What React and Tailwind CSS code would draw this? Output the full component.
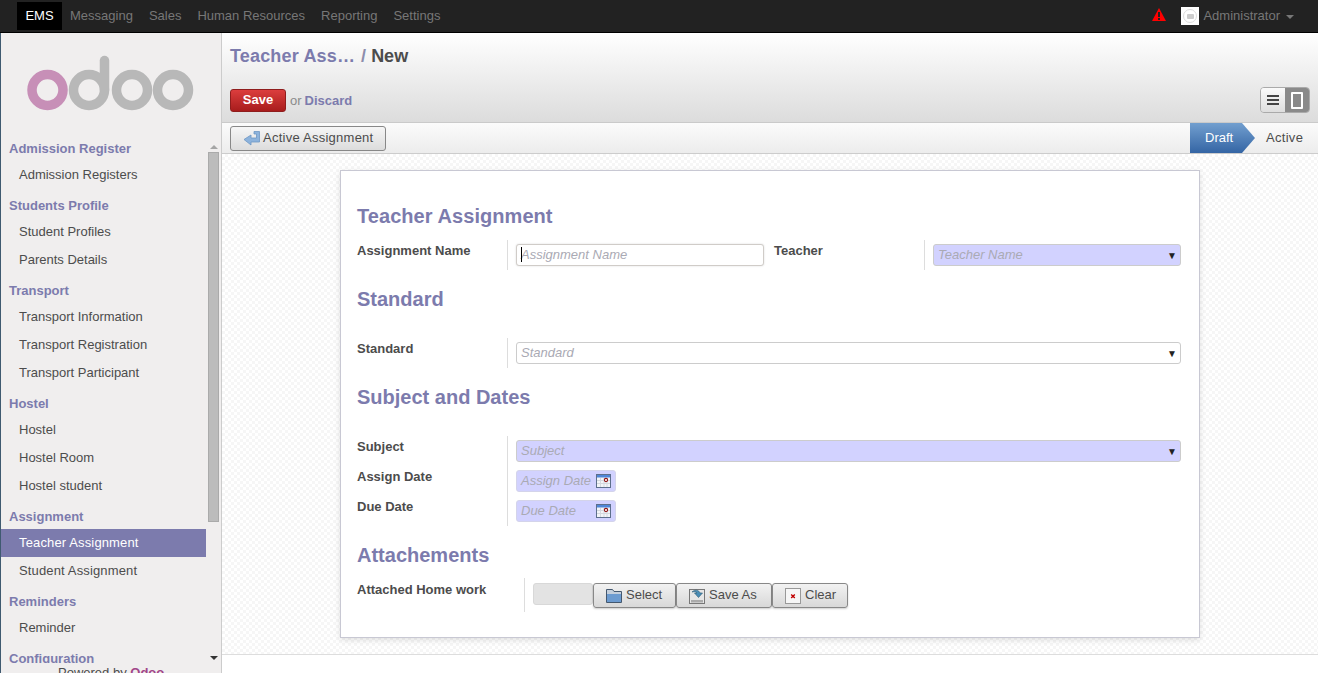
const sidebarMenu = [
  { title: "Admission Register", items: ["Admission Registers"] },
  { title: "Students Profile", items: ["Student Profiles", "Parents Details"] },
  { title: "Transport", items: ["Transport Information", "Transport Registration", "Transport Participant"] },
  { title: "Hostel", items: ["Hostel", "Hostel Room", "Hostel student"] },
  { title: "Assignment", items: ["Teacher Assignment", "Student Assignment"] },
  { title: "Reminders", items: ["Reminder"] },
  { title: "Configuration", items: [] },
];

const topMenu = ["Messaging", "Sales", "Human Resources", "Reporting", "Settings"];

function OdooLogo() {
  return (
    <svg width="170" height="60" viewBox="0 0 170 60" className="block">
      <circle cx="20.5" cy="35" r="15.5" fill="none" stroke="#c78fb7" strokeWidth="9.5" />
      <circle cx="62" cy="35" r="15.5" fill="none" stroke="#b8b8b8" strokeWidth="9.5" />
      <path d="M77.5 35V5.5" fill="none" stroke="#b8b8b8" strokeWidth="9.5" strokeLinecap="round" />
      <circle cx="105" cy="35" r="15.5" fill="none" stroke="#b8b8b8" strokeWidth="9.5" />
      <circle cx="146" cy="35" r="15.5" fill="none" stroke="#b8b8b8" strokeWidth="9.5" />
    </svg>
  );
}

function WarningIcon() {
  return (
    <svg width="14" height="13" viewBox="0 0 14 13" className="block">
      <path d="M7 0L14 13H0z" fill="#ff0000" />
      <path d="M7 4v5M7 10v2" stroke="#222222" strokeWidth="2" />
    </svg>
  );
}

function CalendarIcon() {
  return (
    <svg width="15" height="14" viewBox="0 0 15 14" className="block">
      <rect x="0.5" y="0.5" width="14" height="13" fill="#f2f4f8" stroke="#5d6f8c" />
      <rect x="1" y="1" width="13" height="2.5" fill="#4f86d8" />
      <path d="M1 6.5h13M1 9.5h13M4.5 4v9M8 4v9M11 4v9" stroke="#d4d8de" strokeWidth="1" />
      <circle cx="10" cy="6" r="1.6" fill="#fff" stroke="#8e1212" strokeWidth="1.1" />
    </svg>
  );
}

function FolderIcon() {
  return (
    <svg width="16" height="15" viewBox="0 0 16 15" className="block">
      <path d="M0.5 14.5V1.5h6l1.5 2h7.5v11z" fill="#c4cfdc" stroke="#44586f" />
      <path d="M1 14V6h14v8z" fill="#6c9bd0" />
    </svg>
  );
}

function SaveAsIcon() {
  return (
    <svg width="16" height="16" viewBox="0 0 16 16" className="block">
      <rect x="0.5" y="1.5" width="15" height="14" fill="#e6e6e6" stroke="#777" />
      <rect x="2" y="12" width="12" height="2.5" fill="#aaa" />
      <path d="M3 4c3-3 7-2 8 1h2.5l-4 4.5-4-4.5H8c-1-1.5-3-1.5-5-1z" fill="#4a8db5" stroke="#2c5a75" strokeWidth="0.6" />
    </svg>
  );
}

function ClearIcon() {
  return (
    <svg width="16" height="16" viewBox="0 0 16 16" className="block">
      <rect x="0.5" y="0.5" width="15" height="15" fill="#f6f6f6" stroke="#999" />
      <path d="M6.2 6.5l3.6 3.5M9.8 6.5l-3.6 3.5" stroke="#c00000" strokeWidth="1.4" />
    </svg>
  );
}

function ReturnIcon() {
  return (
    <svg width="17" height="17" viewBox="0 0 17 17" className="block">
      <path d="M16.5 1.5H11v2.5h2.5v4H8V5L1 9.5 8 15v-3h8.5z" fill="#8db3dc" stroke="#6d97c4" strokeWidth="0.8" strokeLinejoin="round" />
    </svg>
  );
}

function SectionTitle({ children, className }) {
  return <h2 className={`text-[20px] leading-[22px] font-bold text-[#7c7bad] ${className}`}>{children}</h2>;
}

function Label({ children, className }) {
  return <div className={`font-bold text-[13px] leading-[18px] text-[#4c4c4c] ${className}`}>{children}</div>;
}

function SelectBox({ placeholder, required, className }) {
  return (
    <div
      className={`h-[22px] flex items-center justify-between pl-[4px] pr-[3px] rounded-[3px] border border-[#cccccc] italic text-[13px] text-[#aaaab4] ${
        required ? "bg-[#d2d2ff]" : "bg-white"
      } ${className}`}
    >
      <span>{placeholder}</span>
      <span className="not-italic text-[10px] text-[#222]">▼</span>
    </div>
  );
}

function DateBox({ placeholder }) {
  return (
    <div className="w-[100px] h-[22px] flex items-center justify-between pl-[4px] pr-[4px] rounded-[3px] border border-[#d4d4ea] bg-[#d2d2ff] italic text-[13px] text-[#aaaab4]">
      <span>{placeholder}</span>
      <CalendarIcon />
    </div>
  );
}

function FileButton({ icon, label, className }) {
  return (
    <button className={`h-[25px] flex items-center gap-[4px] rounded-[3px] border border-[#888] bg-gradient-to-b from-[#f2f2f2] to-[#d8d8d8] text-[13px] text-[#4c4c4c] shadow-[0_1px_2px_rgba(0,0,0,0.2)] ${className}`}>
      {icon}
      <span className="pb-[2px]">{label}</span>
    </button>
  );
}

export default function App() {
  return (
    <div className="h-screen overflow-hidden flex flex-col bg-white text-[13px] text-[#4c4c4c] font-['Liberation_Sans',Arial,sans-serif]">
      {/* top bar */}
      <div className="h-[33px] shrink-0 flex items-center justify-between bg-[#222222] border-b border-black">
        <div className="flex items-center pl-[17px]">
          <div className="h-[28px] w-[45px] flex items-center justify-center bg-black text-white">EMS</div>
          {topMenu.map((item) => (
            <span key={item} className="pl-[8px] pr-[8px] text-[#777777]">
              {item}
            </span>
          ))}
        </div>
        <div className="flex items-center pr-[24px] text-[#777777]">
          <div className="mr-[15px] mb-[3px]">
            <WarningIcon />
          </div>
          <div className="w-[18px] h-[18px] mr-[4px] bg-white flex items-center justify-center">
            <div className="w-[14px] h-[14px] rounded-full border border-[#ddd] flex items-center justify-center">
              <div className="w-[7px] h-[5px] bg-[#ccc] rounded-[1px]" />
            </div>
          </div>
          <span>Administrator</span>
          <span className="ml-[6px] mt-[2px] border-x-[4px] border-t-[4px] border-x-transparent border-t-[#777777]" />
        </div>
      </div>

      <div className="flex-1 flex min-h-0">
        {/* sidebar */}
        <div className="w-[222px] shrink-0 flex flex-col bg-[#f0eeee] border-l border-l-[#3f5a70] border-r border-r-[#cccccc]">
          <div className="h-[107px] shrink-0 pl-[26px] pt-[22px]">
            <OdooLogo />
          </div>
          <div className="h-[523px] shrink-0 flex overflow-hidden">
            <div className="w-[205px] shrink-0 overflow-hidden">
              {sidebarMenu.map((group) => (
                <div key={group.title} className="pb-[8px]">
                  <div className="h-[17px] pl-[8px] font-bold leading-[17px] text-[#7c7bad]">{group.title}</div>
                  <div className="pt-[4px]">
                    {group.items.map((item) => (
                      <div
                        key={item}
                        className={`h-[28px] pl-[18px] leading-[27px] ${item.includes("Assignment") ? "tracking-[0.14px]" : ""} ${
                          item === "Teacher Assignment" ? "bg-[#7c7bad] text-white" : "text-[#4c4c4c]"
                        }`}
                      >
                        {item}
                      </div>
                    ))}
                  </div>
                </div>
              ))}
            </div>
            <div className="flex-1 flex flex-col items-center pt-[5px]">
              <span className="border-x-[4px] border-b-[4px] border-x-transparent border-b-[#a5a5a5]" />
              <div className="w-[11px] h-[370px] mt-[3px] bg-[#bcbcbc] border border-[#aaaaaa]" />
              <span className="mt-[134px] border-x-[4px] border-t-[4px] border-x-transparent border-t-[#333]" />
            </div>
          </div>
          <div className="pl-[57px] pt-[2px] leading-[15px] text-[#4c4c4c]">
            Powered by <span className="font-bold text-[#a24689]">Odoo</span>
          </div>
        </div>

        {/* main */}
        <div className="flex-1 min-w-0 flex flex-col">
          <div className="h-[90px] shrink-0 bg-gradient-to-b from-white to-[#dcdcdc] border-b border-[#cacaca] pl-[8px] pr-[8px]">
            <div className="pt-[12px] h-[55px] text-[18px] leading-[22px] font-bold">
              <span className="text-[#7c7bad] tracking-[0.17px]">Teacher Ass…</span>
              <span className="text-[#8d8dac] pl-[6px] pr-[5px]">/</span>
              <span className="text-[#4c4c4c]">New</span>
            </div>
            <div className="flex items-center justify-between -mt-px">
              <div className="flex items-center">
                <button className="w-[56px] h-[23px] rounded-[3px] border border-[#8f1d1d] bg-gradient-to-b from-[#dc3d3d] to-[#a81c1c] text-white font-bold text-[13px]">
                  Save
                </button>
                <span className="ml-[4px] pt-[1px] text-[#8a8a8a]">or</span>
                <span className="ml-[3px] pt-[1px] font-bold text-[#7c7bad]">Discard</span>
              </div>
              <div className="flex w-[50px] h-[26px] rounded-[4px] border border-[#aaaaaa] overflow-hidden">
                <div className="w-[24px] flex flex-col items-center justify-center gap-[2px] bg-gradient-to-b from-[#fafafa] to-[#dedede]">
                  <div className="w-[12px] h-[2px] bg-[#444]" />
                  <div className="w-[12px] h-[2px] bg-[#444]" />
                  <div className="w-[12px] h-[2px] bg-[#444]" />
                </div>
                <div className="flex-1 flex items-center justify-center bg-[#8a8a8a]">
                  <div className="w-[12px] h-[17px] rounded-[1px] border-2 border-white" />
                </div>
              </div>
            </div>
          </div>

          {/* status bar */}
          <div className="h-[31px] shrink-0 flex items-center justify-between bg-gradient-to-b from-[#fbfbfb] to-[#ececec] border-b border-[#cccccc] pl-[8px]">
            <button className="w-[156px] h-[25px] flex items-center gap-[3px] pl-[12px] rounded-[3px] border border-[#888] bg-gradient-to-b from-[#f6f6f6] to-[#dcdcdc] text-[13px] text-[#4c4c4c] tracking-[0.25px]">
              <ReturnIcon />
              Active Assignment
            </button>
            <div className="flex items-center h-full">
              <div className="w-[65px] h-full pl-[15px] flex items-center bg-gradient-to-b from-[#729fcf] to-[#3465a4] text-white [clip-path:polygon(0_0,80%_0,100%_50%,80%_100%,0_100%)]">
                Draft
              </div>
              <div className="w-[63px] pl-[11px] text-[#4c4c4c] tracking-[0.3px]">Active</div>
            </div>
          </div>

          {/* form area */}
          <div className="h-[501px] shrink-0 pt-[16px] border-b border-[#dddddd] bg-[repeating-conic-gradient(#f6f6f6_0_25%,#ffffff_0_50%)] bg-[length:6px_6px]">
            <div className="w-[860px] h-[468px] ml-[118px] pl-[16px] pr-[18px] pt-[34px] bg-white border border-[#c8c8d3] shadow-[0_2px_6px_rgba(0,0,0,0.12)]">
              <SectionTitle className="mb-[13px] tracking-[0.06px]">Teacher Assignment</SectionTitle>
              <div className="flex h-[30px]">
                <Label className="w-[150px] pt-[2px]">Assignment Name</Label>
                <div className="w-[258px] border-l border-[#dddddd] pl-[8px] pt-[4px]">
                  <div className="relative w-[248px] h-[22px] flex items-center pl-[4px] rounded-[3px] border border-[#d0ccc8] bg-white italic text-[#aaaab4] shadow-[0_0_2px_rgba(0,0,0,0.15)]">
                    <span className="absolute left-[4px] top-[2px] w-px h-[15px] bg-black" />
                    Assignment Name
                  </div>
                </div>
                <div className="w-[9px] shrink-0" />
                <Label className="w-[150px] pt-[2px]">Teacher</Label>
                <div className="flex-1 border-l border-[#dddddd] pl-[8px] pt-[4px]">
                  <SelectBox placeholder="Teacher Name" required className="w-[248px]" />
                </div>
              </div>

              <SectionTitle className="mt-[18px] mb-[28px]">Standard</SectionTitle>
              <div className="flex h-[30px]">
                <Label className="w-[150px] pt-[2px]">Standard</Label>
                <div className="flex-1 border-l border-[#dddddd] pl-[8px] pt-[4px]">
                  <SelectBox placeholder="Standard" />
                </div>
              </div>

              <SectionTitle className="mt-[18px] mb-[28px]">Subject and Dates</SectionTitle>
              <div className="flex h-[90px]">
                <div className="w-[150px]">
                  <Label className="h-[30px] pt-[2px]">Subject</Label>
                  <Label className="h-[30px] pt-[2px]">Assign Date</Label>
                  <Label className="h-[30px] pt-[2px]">Due Date</Label>
                </div>
                <div className="flex-1 border-l border-[#dddddd] pl-[8px] pt-[4px] flex flex-col gap-[8px]">
                  <SelectBox placeholder="Subject" required />
                  <DateBox placeholder="Assign Date" />
                  <DateBox placeholder="Due Date" />
                </div>
              </div>

              <SectionTitle className="mt-[18px] mb-[12px]">Attachements</SectionTitle>
              <div className="flex h-[34px]">
                <Label className="w-[167px] pt-[3px]">Attached Home work</Label>
                <div className="flex-1 flex border-l border-[#dddddd] pl-[8px] pt-[5px]">
                  <div className="w-[60px] h-[22px] rounded-[3px] border border-[#d8d8d8] bg-[#e3e3e3]" />
                  <FileButton icon={<FolderIcon />} label="Select" className="w-[83px] pl-[12px]" />
                  <FileButton icon={<SaveAsIcon />} label="Save As" className="w-[96px] pl-[12px]" />
                  <FileButton icon={<ClearIcon />} label="Clear" className="w-[76px] pl-[12px]" />
                </div>
              </div>
            </div>
          </div>
        </div>
      </div>
    </div>
  );
}
